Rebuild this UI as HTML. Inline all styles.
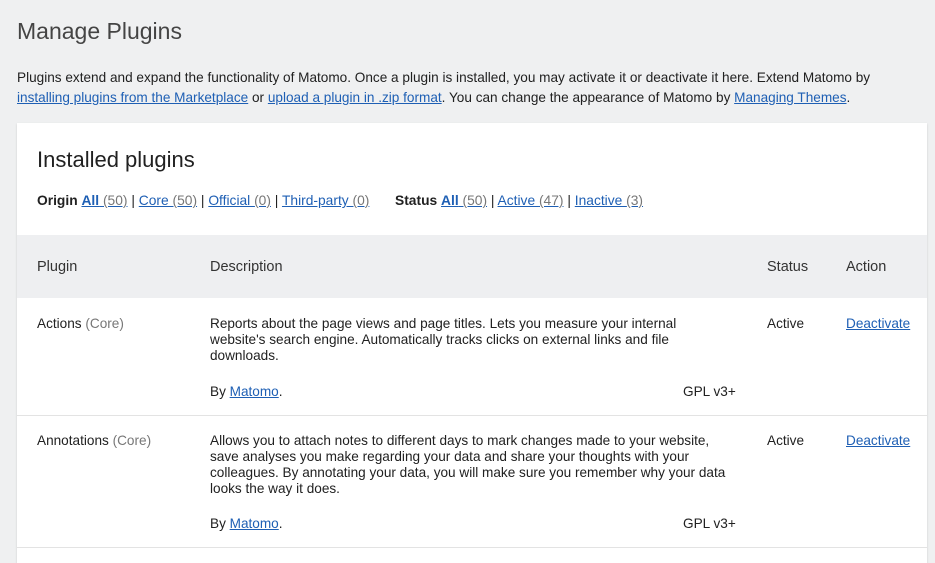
<!DOCTYPE html>
<html><head><style>
body{margin:0;width:935px;height:550px;background:#eff0f1;font-family:"Liberation Sans",sans-serif;color:#212121;overflow:hidden;position:relative}
.a{position:absolute;white-space:nowrap}
a{color:#1e5fb4;text-decoration:underline}
.g{color:#777}
h1{position:absolute;left:17px;top:18px;margin:0;font-size:23px;font-weight:normal;color:#444}
.p{font-size:13.6px;line-height:20px}
.card{position:absolute;left:17px;top:123px;width:910px;height:440px;background:#fff;box-shadow:0 1px 2px rgba(0,0,0,.15)}
.hd{position:absolute;left:0;top:112px;width:910px;height:63px;background:#eeeff1}
.sep{position:absolute;left:0;width:910px;height:1px;background:#e3e3e3}
.t{font-size:13.6px;line-height:16px}
</style></head><body>
<h1>Manage Plugins</h1>
<div class="a p" style="left:17px;top:68px">Plugins extend and expand the functionality of Matomo. Once a plugin is installed, you may activate it or deactivate it here. Extend Matomo by<br><a>installing plugins from the Marketplace</a> or <a>upload a plugin in .zip format</a>. You can change the appearance of Matomo by <a>Managing Themes</a>.</div>
<div class="card">
<div class="a" style="left:20px;top:24px;font-size:22px;color:#212121">Installed plugins</div>
<div class="a t" style="left:20px;top:70px;font-size:13.8px"><b>Origin</b> <a><b>All</b> <span class="g">(50)</span></a> | <a>Core <span class="g">(50)</span></a> | <a>Official <span class="g">(0)</span></a> | <a>Third-party <span class="g">(0)</span></a></div>
<div class="a t" style="left:378px;top:70px;font-size:13.8px"><b>Status</b> <a><b>All</b> <span class="g">(50)</span></a> | <a>Active <span class="g">(47)</span></a> | <a>Inactive <span class="g">(3)</span></a></div>
<div class="hd">
<div class="a" style="left:20px;top:24px;font-size:14.5px;color:#333">Plugin</div>
<div class="a" style="left:193px;top:24px;font-size:14.5px;color:#333">Description</div>
<div class="a" style="left:750px;top:24px;font-size:14.5px;color:#333">Status</div>
<div class="a" style="left:829px;top:24px;font-size:14.5px;color:#333">Action</div>
</div>
<div class="a t" style="left:20px;top:193px">Actions <span class="g">(Core)</span></div>
<div class="a t" style="left:193px;top:193px">Reports about the page views and page titles. Lets you measure your internal<br>website's search engine. Automatically tracks clicks on external links and file<br>downloads.</div>
<div class="a t" style="left:193px;top:261px">By <a>Matomo</a>.</div>
<div class="a t" style="left:666px;top:261px">GPL v3+</div>
<div class="a t" style="left:750px;top:193px">Active</div>
<div class="a t" style="left:829px;top:193px"><a>Deactivate</a></div>
<div class="sep" style="top:292px"></div>
<div class="a t" style="left:20px;top:310px">Annotations <span class="g">(Core)</span></div>
<div class="a t" style="left:193px;top:310px">Allows you to attach notes to different days to mark changes made to your website,<br>save analyses you make regarding your data and share your thoughts with your<br>colleagues. By annotating your data, you will make sure you remember why your data<br>looks the way it does.</div>
<div class="a t" style="left:193px;top:393px">By <a>Matomo</a>.</div>
<div class="a t" style="left:666px;top:393px">GPL v3+</div>
<div class="a t" style="left:750px;top:310px">Active</div>
<div class="a t" style="left:829px;top:310px"><a>Deactivate</a></div>
<div class="sep" style="top:424px"></div>
</div>
</body></html>
